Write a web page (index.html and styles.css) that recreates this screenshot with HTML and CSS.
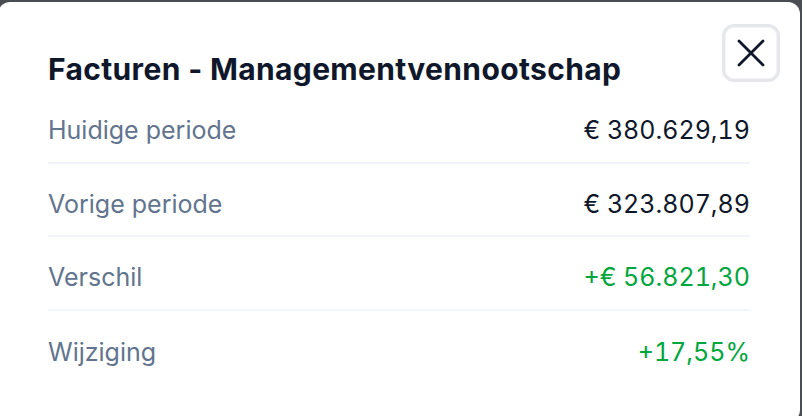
FILE: index.html
```html
<!DOCTYPE html>
<html lang="nl">
<head>
<meta charset="utf-8">
<link rel="stylesheet" href="styles.css">
</head>
<body>
<div class="modal">
  <div class="header">
    <h2 class="title">Facturen - Managementvennootschap</h2>
    <button class="close" aria-label="Sluiten">
      <svg width="28" height="28" viewBox="0 0 28 28" fill="none" stroke="#0f172b" stroke-width="2.8" stroke-linecap="round"><path d="M2 2 26 26M26 2 2 26"/></svg>
    </button>
  </div>
  <div class="rows">
    <div class="row"><span class="label">Huidige periode</span><span class="value">€ 380.629,19</span></div>
    <div class="row"><span class="label">Vorige periode</span><span class="value">€ 323.807,89</span></div>
    <div class="row"><span class="label">Verschil</span><span class="value pos">+€ 56.821,30</span></div>
    <div class="row"><span class="label">Wijziging</span><span class="value pos">+17,55%</span></div>
  </div>
</div>
</body>
</html>
```
FILE: styles.css
```css
html, body { margin: 0; padding: 0; }
body {
  background: #4a4d52;
  width: 802px;
  height: 416px;
  overflow: hidden;
  font-family: Inter, "Noto Sans", sans-serif;
}
.modal {
  margin: 2px 2px 0 -2px;
  height: 420px;
  background: #fff;
  border-radius: 12px;
  box-sizing: border-box;
  padding: 22px 50px 0 50px;
}
.header {
  display: flex;
  justify-content: space-between;
  align-items: flex-start;
  margin-right: -30px;
}
.title {
  margin: 27px 0 0 0;
  font-size: 30px;
  font-weight: 700;
  color: #0f172b;
  line-height: 36px;
  letter-spacing: 0.35px;
}
.close {
  width: 58px;
  height: 58px;
  box-sizing: border-box;
  border: 3px solid #e5e7eb;
  border-radius: 12px;
  background: #fff;
  display: flex;
  align-items: center;
  justify-content: center;
  padding: 0;
  box-shadow: inset 0 0 0 1px #f3f4f6;
}
.rows {
  display: flex;
  flex-direction: column;
  margin-top: 3px;
}
.row {
  display: flex;
  justify-content: space-between;
  align-items: center;
  box-sizing: border-box;
  height: 73.5px;
  padding-top: 9px;
  border-bottom: 2px solid #f1f5f9;
  font-size: 25px;
  line-height: 30px;
}
.row:last-child { border-bottom: none; }
.label { color: #62748e; }
.value { color: #0f172b; font-variant-numeric: tabular-nums; }
.value.pos { color: #00a63e; }
```
